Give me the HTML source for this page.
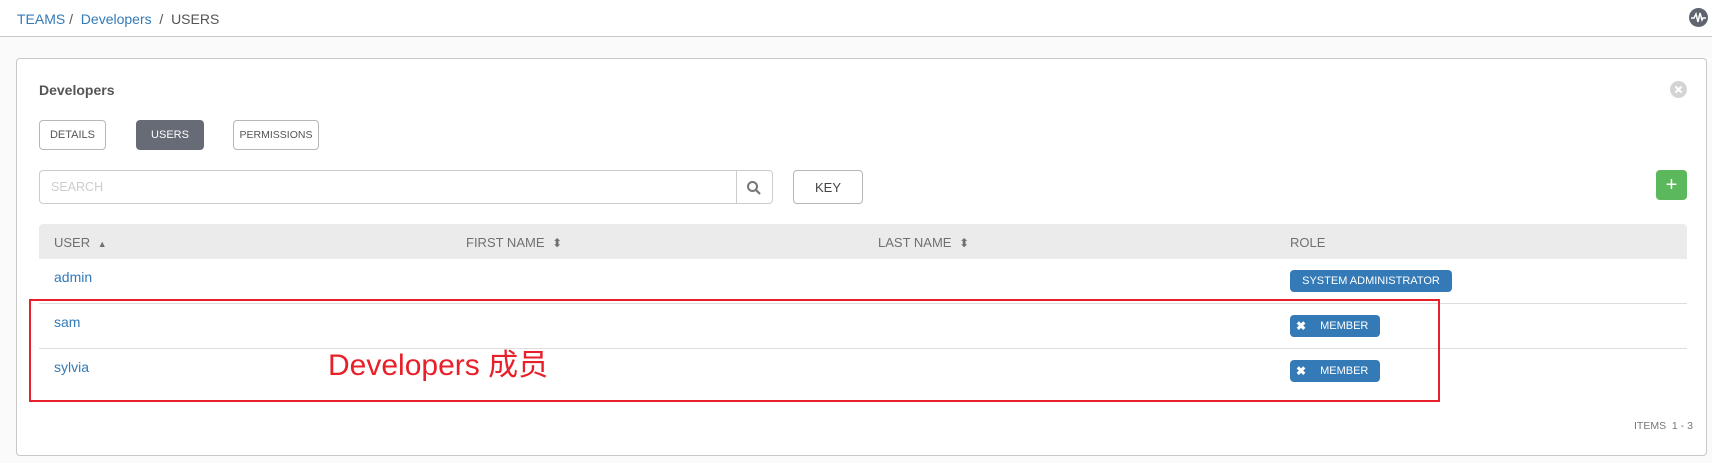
<!DOCTYPE html>
<html><head><meta charset="utf-8"><style>
*{box-sizing:border-box;margin:0;padding:0}
body{width:1712px;height:463px;background:#fafafa;font-family:"Liberation Sans","Noto Sans CJK SC",sans-serif;position:relative;overflow:hidden;color:#333}
.a{position:absolute}
.top{left:0;top:0;width:1712px;height:37px;background:#fff;border-bottom:1px solid #c8c8c8}
.bc{left:17px;top:11px;font-size:14px;color:#555}
.bc span.l{color:#337ab7}
.panel{left:16px;top:58px;width:1691px;height:398px;background:#fff;border:1px solid #c8c8c8;border-radius:4px}
.btn{position:absolute;height:30px;border:1px solid #b7b7b7;border-radius:4px;font-size:11px;color:#555;display:flex;align-items:center;justify-content:center;background:#fff}
.hdr{font-size:13px;color:#707070}
.badge{position:absolute;height:22px;background:#337ab7;color:#fff;font-size:11px;border-radius:4px;display:flex;align-items:center}
.row{position:absolute;left:39px;width:1648px;border-top:1px solid #ddd}
.lnk{position:absolute;color:#337ab7;font-size:14px}
</style></head><body>
<div class="a top"></div>
<div class="a bc"><span class="l">TEAMS</span>&nbsp;/&nbsp; <span class="l">Developers</span>&nbsp; /&nbsp; USERS</div>
<svg class="a" style="left:1689px;top:8px" width="19" height="19" viewBox="0 0 19 19"><circle cx="9.5" cy="9.5" r="9.5" fill="#5f646e"/><path d="M2 10h3l2-4 2 8 2-9 2 7 1-2h3" stroke="#fff" stroke-width="1.5" fill="none"/></svg>
<div class="a panel"></div>
<div class="a" style="left:39px;top:82px;font-size:14px;font-weight:bold;color:#555">Developers</div>
<svg class="a" style="left:1670px;top:81px" width="17" height="17" viewBox="0 0 17 17"><circle cx="8.5" cy="8.5" r="8.5" fill="#d4d4d4"/><path d="M5.5 5.5l6 6M11.5 5.5l-6 6" stroke="#fff" stroke-width="2.2"/></svg>
<div class="btn" style="left:39px;top:120px;width:67px">DETAILS</div>
<div class="btn" style="left:136px;top:120px;width:68px;background:#676b75;border-color:#676b75;color:#fff">USERS</div>
<div class="btn" style="left:233px;top:120px;width:86px;font-size:10.5px">PERMISSIONS</div>
<div class="a" style="left:39px;top:170px;width:734px;height:34px;border:1px solid #ccc;border-radius:4px"></div>
<div class="a" style="left:51px;top:180px;font-size:12.5px;color:#ccc">SEARCH</div>
<div class="a" style="left:736px;top:170px;width:37px;height:34px;border-left:1px solid #ccc"></div>
<svg class="a" style="left:746px;top:180px" width="16" height="16" viewBox="0 0 16 16"><circle cx="6.5" cy="6.5" r="4.5" stroke="#777" stroke-width="2" fill="none"/><path d="M10 10l4 4" stroke="#777" stroke-width="2.2"/></svg>
<div class="btn" style="left:793px;top:170px;width:70px;height:34px;font-size:13px;color:#444">KEY</div>
<div class="a" style="left:1656px;top:170px;width:31px;height:30px;background:#5cb85c;border-radius:4px;color:#fff;font-size:20px;text-align:center;line-height:30px">+</div>
<div class="a" style="left:39px;top:224px;width:1648px;height:35px;background:#ebebeb;border-radius:4px 4px 0 0"></div>
<div class="a hdr" style="left:54px;top:235px">USER <span style="font-size:9px;margin-left:4px">▲</span></div>
<div class="a hdr" style="left:466px;top:235px">FIRST NAME <span style="font-size:12px;margin-left:4px">⬍</span></div>
<div class="a hdr" style="left:878px;top:235px">LAST NAME <span style="font-size:12px;margin-left:4px">⬍</span></div>
<div class="a hdr" style="left:1290px;top:235px">ROLE</div>
<div class="row" style="top:303px"></div>
<div class="row" style="top:348px"></div>
<div class="lnk" style="left:54px;top:269px">admin</div>
<div class="lnk" style="left:54px;top:314px">sam</div>
<div class="lnk" style="left:54px;top:359px">sylvia</div>
<div class="badge" style="left:1290px;top:270px;width:162px;justify-content:center">SYSTEM ADMINISTRATOR</div>
<div class="badge" style="left:1290px;top:315px;width:90px"><span style="margin-left:6px;font-weight:bold;font-size:12px">✖</span><span style="margin-left:14px">MEMBER</span></div>
<div class="badge" style="left:1290px;top:360px;width:90px"><span style="margin-left:6px;font-weight:bold;font-size:12px">✖</span><span style="margin-left:14px">MEMBER</span></div>
<div class="a" style="left:29px;top:299px;width:1411px;height:103px;border:2px solid #e8202a"></div>
<div class="a" style="left:328px;top:340px;font-size:30px;color:#e8202a">Developers 成员</div>
<div class="a" style="left:1634px;top:420px;font-size:10.5px;color:#777">ITEMS&nbsp; 1 - 3</div>
</body></html>
